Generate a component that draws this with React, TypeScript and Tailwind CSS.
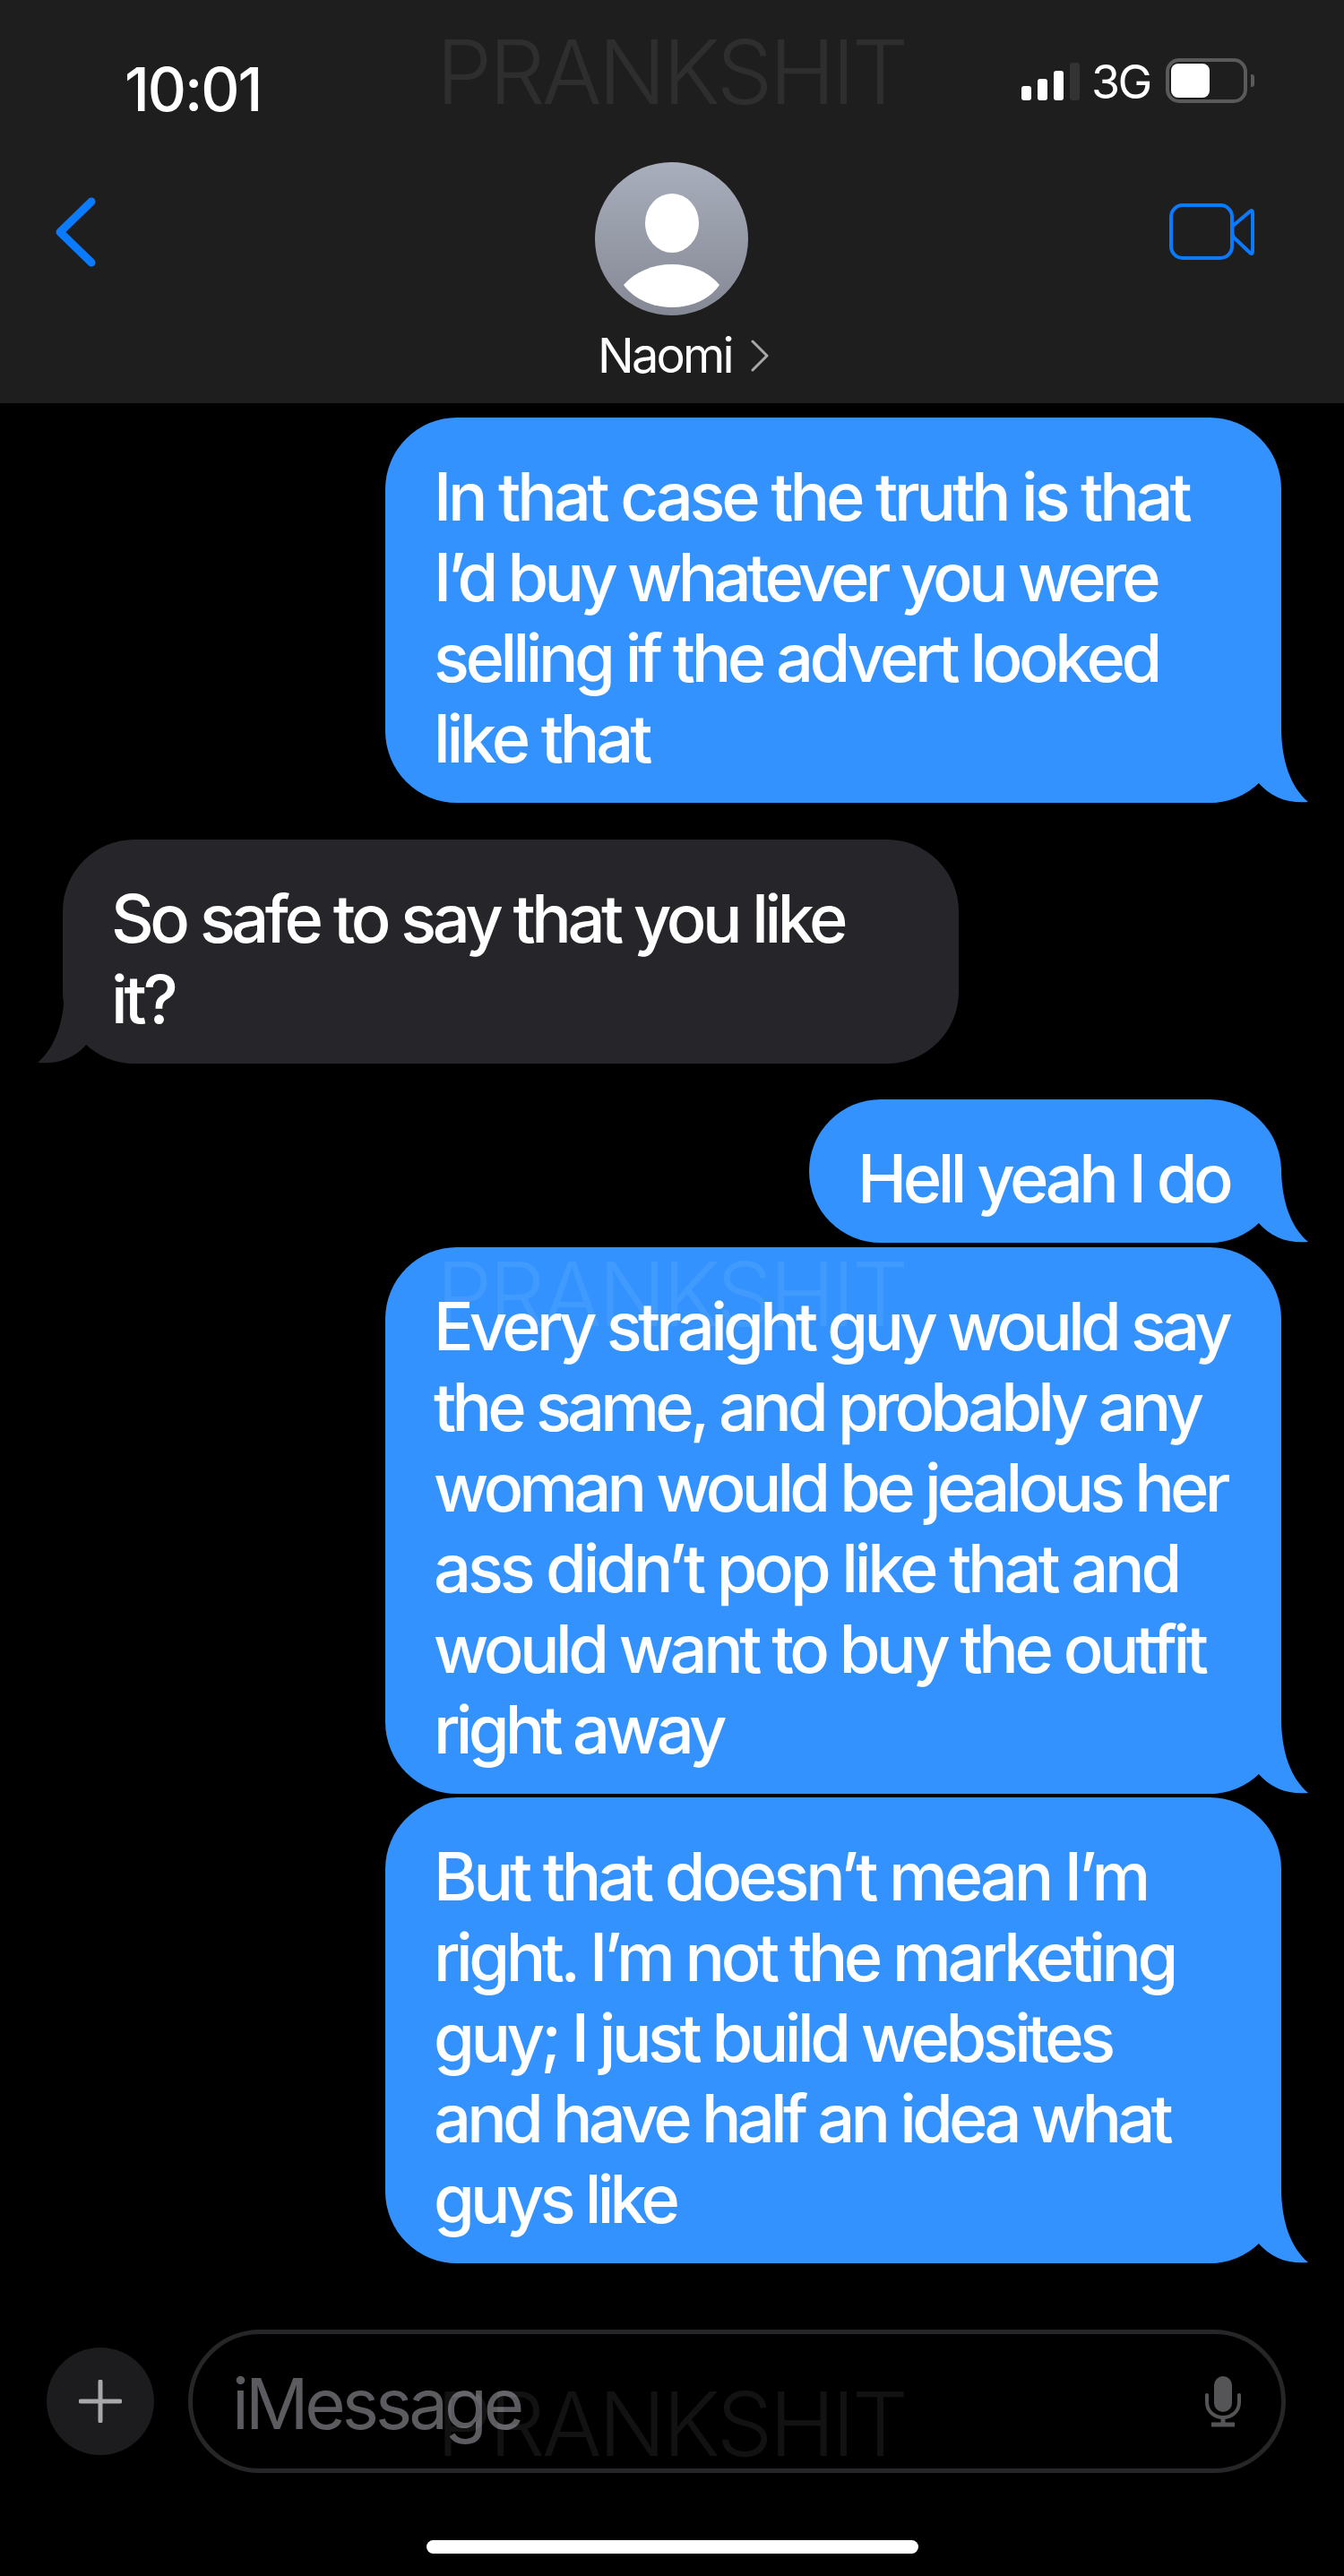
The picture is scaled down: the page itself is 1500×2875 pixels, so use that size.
import { ReactNode } from 'react';

const font = { fontFamily: 'Inter, "Liberation Sans", sans-serif' };

// Inter runs a touch wider than the phone font, and not evenly, so lines are tightened one by one
const T1 = 'tracking-[-4.1px]';
const T2 = 'tracking-[-4.45px]';
const T3 = 'tracking-[-4.75px]';

type Line = { text: string; track: string };

function TailRight() {
  return (
    <svg className="absolute right-[-30px] bottom-0" width="113" height="84" viewBox="0 0 113 84">
      <path d="M83 0C83 36 93 66 113 83C92 85 72 79 56 60C40 77 20 84 0 84L0 0Z" fill="#3392fe" />
    </svg>
  );
}

function TailLeft() {
  return (
    <svg className="absolute left-[-28px] bottom-0" width="113" height="84" viewBox="0 0 113 84">
      <path d="M30 0C30 36 20 66 0 83C21 85 41 79 55 62C73 77 93 84 113 84L113 0Z" fill="#26262a" />
    </svg>
  );
}

function Bubble({ lines, mine, width }: { lines: Line[]; mine: boolean; width: string }) {
  return (
    <div className={`relative rounded-[80px] pt-[43px] pb-[27px] pl-[54px] ${width} ${mine ? 'self-end bg-[#3392fe]' : 'self-start bg-[#26262a]'}`}>
      {mine ? <TailRight /> : <TailLeft />}
      <div className="relative text-[74px] leading-[90px] font-[450] text-white whitespace-nowrap">
        {lines.map((line, i) => (
          <div key={i} className={line.track}>
            {line.text}
          </div>
        ))}
      </div>
    </div>
  );
}

function Watermark({ className }: { className: string }) {
  return (
    <div className={`absolute left-[487px] text-[99px] leading-[100px] font-light tracking-[-3.5px] text-white/[0.07] pointer-events-none ${className}`}>
      PRANKSHIT
    </div>
  );
}

function SignalBars() {
  return (
    <div className="flex items-end gap-[7px] h-[43px] mt-[4px]">
      <div className="w-[11px] h-[16px] rounded-[3px] bg-white" />
      <div className="w-[11px] h-[24px] rounded-[3px] bg-white" />
      <div className="w-[11px] h-[33px] rounded-[3px] bg-white" />
      <div className="w-[11px] h-[42px] rounded-[3px] bg-[#333333]" />
    </div>
  );
}

function Battery() {
  return (
    <div className="flex items-center gap-[4px]">
      <div className="w-[91px] h-[50px] rounded-[15px] border-[4px] border-[#5a5a5a] p-[2px]">
        <div className="w-[43px] h-full rounded-[8px] bg-white" />
      </div>
      <div className="w-[4px] h-[14px] rounded-r-[3px] bg-[#5a5a5a]" />
    </div>
  );
}

function Avatar() {
  return (
    <div className="w-[171px] h-[171px] rounded-full bg-gradient-to-b from-[#a9aebc] to-[#858995] overflow-hidden shrink-0">
      <svg width="171" height="171" viewBox="0 0 171 171">
        <ellipse cx="86" cy="68" rx="30" ry="33" fill="#fff" />
        <path d="M32 137C45 122 65 114 86 114C107 114 127 122 139 137C128 153 108 162 86 162C64 162 44 153 32 137Z" fill="#fff" />
      </svg>
    </div>
  );
}

function Header({ children }: { children: ReactNode }) {
  return <header className="h-[450px] bg-[#1e1e1e] shrink-0">{children}</header>;
}

export default function App() {
  return (
    <div className="relative w-[1500px] h-[2875px] bg-black flex flex-col overflow-hidden" style={font}>
      <Header>
        {/* Status bar */}
        <div className="h-[181px] flex items-start justify-between pl-[139px] pr-[100px] pt-[65px]">
          <span className="mt-[5px] text-[67px] leading-[60px] font-medium tracking-[-2px] text-white">10:01</span>
          <div className="flex items-start">
            <SignalBars />
            <span className="ml-[13px] mt-[2px] text-[52px] leading-[50px] tracking-[-2.4px] text-white">3G</span>
            <div className="ml-[17px]">
              <Battery />
            </div>
          </div>
        </div>
        {/* Nav */}
        <div className="grid grid-cols-[1fr_171px_1fr] items-start pl-[61px] pr-[63px]">
          <svg className="justify-self-start mt-[39px]" width="46" height="78" viewBox="0 0 46 78" fill="none">
            <path d="M41 5L6 39L41 73" stroke="#0a7aff" strokeWidth="9" strokeLinecap="round" strokeLinejoin="round" />
          </svg>
          <div className="flex flex-col items-center">
            <Avatar />
            <div className="ml-[27px] mt-[20px] flex items-center gap-[21px] whitespace-nowrap">
              <span className="text-[54px] leading-[50px] tracking-[-2.8px] text-white">Naomi</span>
              <svg width="20" height="36" viewBox="0 0 20 36" fill="none">
                <path d="M2 2L18 18L2 34" stroke="#a9a9a9" strokeWidth="3" strokeLinecap="round" strokeLinejoin="round" />
              </svg>
            </div>
          </div>
          <svg className="justify-self-end mt-[46px] mr-[37px]" width="95" height="63" viewBox="0 0 95 63" fill="none">
            <rect x="2" y="2" width="68" height="59" rx="13" stroke="#0a7aff" strokeWidth="4" />
            <path d="M71 25L90 9C92 7 93 8 93 11V53C93 56 92 57 90 55L72 38C70 35 70 28 71 25Z" stroke="#0a7aff" strokeWidth="4" strokeLinejoin="round" />
          </svg>
        </div>
      </Header>

      {/* Messages */}
      <main className="flex flex-col px-[70px] pt-[16px]">
        <Bubble
          mine
          width="w-[1000px]"
          lines={[
            { text: 'In that case the truth is that', track: T1 },
            { text: 'I’d buy whatever you were', track: T3 },
            { text: 'selling if the advert looked', track: T2 },
            { text: 'like that', track: T1 },
          ]}
        />
        <div className="mt-[41px]">
          <Bubble
            mine={false}
            width="w-[1000px]"
            lines={[
              { text: 'So safe to say that you like', track: T2 },
              { text: 'it?', track: T1 },
            ]}
          />
        </div>
        <div className="mt-[40px] self-end">
          <Bubble mine width="w-[527px]" lines={[{ text: 'Hell yeah I do', track: T2 }]} />
        </div>
        <div className="mt-[5px] self-end">
          <Bubble
            mine
            width="w-[1000px]"
            lines={[
              { text: 'Every straight guy would say', track: T3 },
              { text: 'the same, and probably any', track: T3 },
              { text: 'woman would be jealous her', track: T3 },
              { text: 'ass didn’t pop like that and', track: T1 },
              { text: 'would want to buy the outfit', track: T2 },
              { text: 'right away', track: T3 },
            ]}
          />
        </div>
        <div className="mt-[4px] self-end">
          <Bubble
            mine
            width="w-[1000px]"
            lines={[
              { text: 'But that doesn’t mean I’m', track: T1 },
              { text: 'right. I’m not the marketing', track: T2 },
              { text: 'guy; I just build websites', track: T2 },
              { text: 'and have half an idea what', track: T3 },
              { text: 'guys like', track: T3 },
            ]}
          />
        </div>
      </main>

      {/* Input */}
      <footer className="mt-auto pb-[25px]">
        <div className="flex items-center gap-[38px] pl-[52px] pr-[65px]">
          <div className="w-[120px] h-[120px] rounded-full bg-[#1c1c1e] flex items-center justify-center shrink-0">
            <svg width="48" height="48" viewBox="0 0 48 48" fill="none">
              <path d="M24 2V46M2 24H46" stroke="#a8a8aa" strokeWidth="5" strokeLinecap="round" />
            </svg>
          </div>
          <div className="flex-1 h-[160px] rounded-[80px] border-[5px] border-[#262628] flex items-center justify-between pl-[44px] pr-[45px]">
            <span className="mt-[6px] text-[78px] leading-[90px] tracking-[-4px] text-[#5b5b60]">iMessage</span>
            <svg width="40" height="57" viewBox="0 0 40 57" fill="none">
              <rect x="10" y="0" width="20" height="40" rx="10" fill="#555558" />
              <path d="M2 21V29C2 39 10 46 20 46C30 46 38 39 38 29V21" stroke="#555558" strokeWidth="4" strokeLinecap="round" />
              <path d="M20 46V54M7 54H33" stroke="#555558" strokeWidth="5" />
            </svg>
          </div>
        </div>
        <div className="mt-[75px] flex justify-center">
          <div className="w-[549px] h-[15px] rounded-full bg-white" />
        </div>
      </footer>

      <Watermark className="top-[30px]" />
      <Watermark className="top-[1394px]" />
      <Watermark className="top-[2655px]" />
    </div>
  );
}
